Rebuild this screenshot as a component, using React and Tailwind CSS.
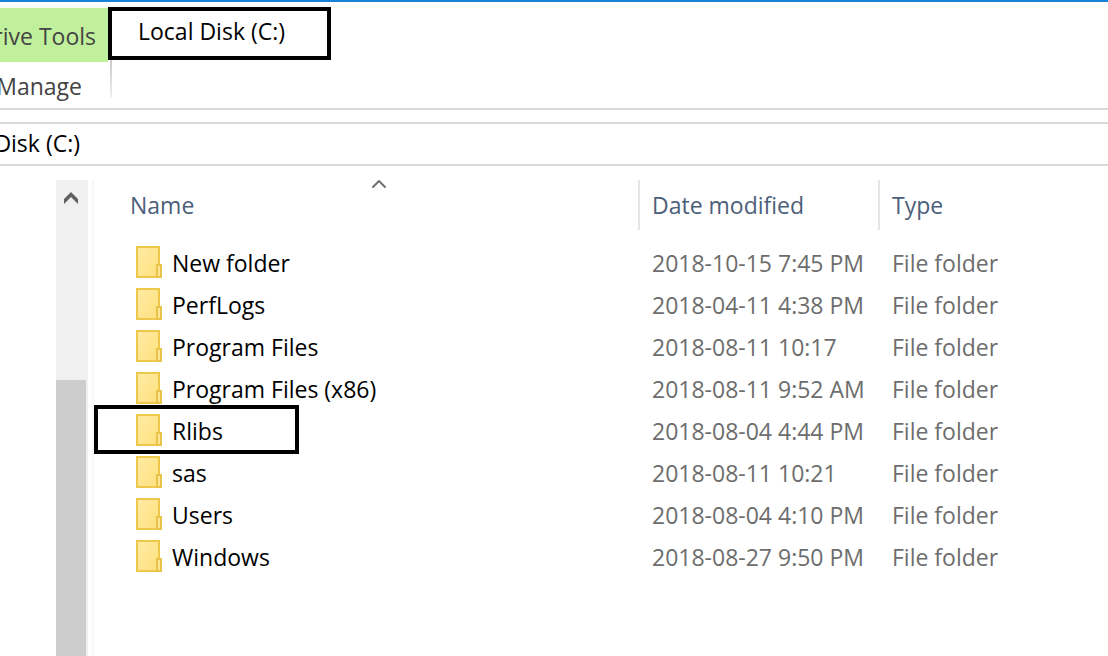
import { ChevronUp } from 'lucide-react';

const FOLDERS = [
  { name: 'New folder', modified: '2018-10-15 7:45 PM' },
  { name: 'PerfLogs', modified: '2018-04-11 4:38 PM' },
  { name: 'Program Files', modified: '2018-08-11 10:17' },
  { name: 'Program Files (x86)', modified: '2018-08-11 9:52 AM' },
  { name: 'Rlibs', modified: '2018-08-04 4:44 PM', marked: true },
  { name: 'sas', modified: '2018-08-11 10:21' },
  { name: 'Users', modified: '2018-08-04 4:10 PM' },
  { name: 'Windows', modified: '2018-08-27 9:50 PM' },
];

function FolderIcon() {
  return (
    <svg viewBox="0 0 26 32" className="h-8 w-[26px] shrink-0 self-start" shapeRendering="crispEdges" aria-hidden="true">
      <defs>
        <linearGradient id="folder" x1="0" y1="0" x2="1" y2="1">
          <stop offset="0" stopColor="#ffeba5" />
          <stop offset="1" stopColor="#fee07d" />
        </linearGradient>
      </defs>
      <path d="M1 1h22v30H1z" fill="url(#folder)" stroke="#edc84b" strokeWidth="2" />
      <path d="M21 19h4v12h-4z" fill="#ffe694" stroke="#e9c24a" strokeWidth="2" />
    </svg>
  );
}

function Ribbon() {
  return (
    <header className="flex h-[108px] shrink-0 border-t-2 border-[#1883d7] pt-[5px]">
      <div className="flex w-[108px] shrink-0 flex-col pt-px text-[#444444]">
        <div className="flex h-[54px] shrink-0 items-center justify-end overflow-hidden bg-[#c1f09c] pt-0.5 pr-3 whitespace-nowrap">
          Drive Tools
        </div>
        <button type="button" className="flex h-[46px] shrink-0 items-center justify-end overflow-hidden pt-0.5 pr-[26px] whitespace-nowrap">
          Manage
        </button>
      </div>
      <div className="flex flex-col items-start">
        <h1 className="h-[53px] w-[223px] border-4 border-black pt-1 pl-[26px] leading-8 text-black">Local Disk (C:)</h1>
        <div className="ml-0.5 h-[38px] w-0.5 bg-linear-to-b from-[#c8c8c8] to-[#f0f0f0]" />
      </div>
    </header>
  );
}

function AddressBar() {
  return (
    <nav className="mt-3 flex h-11 shrink-0 items-center border-y-2 border-[#d9d9d9] pb-0.5">
      <div className="flex w-20 justify-end overflow-hidden whitespace-nowrap text-black">
        <a href="#disk">Disk (C:)</a>
      </div>
    </nav>
  );
}

function ScrollBar() {
  return (
    <div className="ml-14 flex w-8 shrink-0 flex-col bg-[#f0f0f0]">
      <button type="button" aria-label="Scroll up" className="flex h-9 w-[30px] shrink-0 items-center justify-center text-[#606060]">
        <svg viewBox="0 0 14 12" className="h-3 w-3.5" fill="currentColor" aria-hidden="true">
          <path d="M7 0l7 7v5L7 5 0 12V7z" />
        </svg>
      </button>
      <div className="mt-[164px] w-[30px] flex-1 bg-[#cdcdcd]" />
    </div>
  );
}

function FileTable() {
  return (
    <table className="w-full table-fixed border-collapse text-left whitespace-nowrap">
      <colgroup>
        <col className="w-[544px]" />
        <col className="w-60" />
        <col />
      </colgroup>
      <thead className="text-[#4c607a]">
        <tr className="h-[62px] align-top">
          <th className="pl-[26px] font-normal">
            <button type="button" className="relative flex h-[50px] w-full items-center pl-2.5">
              Name
              <ChevronUp className="absolute -top-2 left-1/2 h-6 w-7 -translate-x-1/2 text-[#707070]" strokeWidth={2} aria-hidden="true" />
            </button>
          </th>
          <th className="font-normal">
            <button type="button" className="flex h-[50px] w-full items-center border-l-2 border-[#e5e5e5] pl-3">
              Date modified
            </button>
          </th>
          <th className="font-normal">
            <button type="button" className="flex h-[50px] w-full items-center border-l-2 border-[#e5e5e5] pl-3">
              Type
            </button>
          </th>
        </tr>
      </thead>
      <tbody className="text-[#6d6d6d]">
        {FOLDERS.map((folder) => (
          <tr key={folder.name} className="h-[42px]">
            <td className="relative pl-[42px] text-black">
              <div className="flex h-[34px] items-center gap-2.5">
                <FolderIcon />
                {folder.name}
              </div>
              {folder.marked && <div className="absolute -top-[5px] left-0 h-[49px] w-[205px] border-4 border-black" />}
            </td>
            <td className="pl-3.5">{folder.modified}</td>
            <td className="pl-3.5">File folder</td>
          </tr>
        ))}
      </tbody>
    </table>
  );
}

export default function App() {
  return (
    <div className="flex h-screen flex-col overflow-hidden bg-white font-['Open_Sans',sans-serif] text-[23px] leading-8">
      <Ribbon />
      <div className="h-0.5 shrink-0 bg-[#d9d9d9]" />
      <AddressBar />
      <main className="mt-3.5 flex min-h-0 flex-1">
        <ScrollBar />
        <div className="ml-1 min-w-0 flex-1 border-l-2 border-[#f7f7f7]">
          <FileTable />
        </div>
      </main>
    </div>
  );
}
